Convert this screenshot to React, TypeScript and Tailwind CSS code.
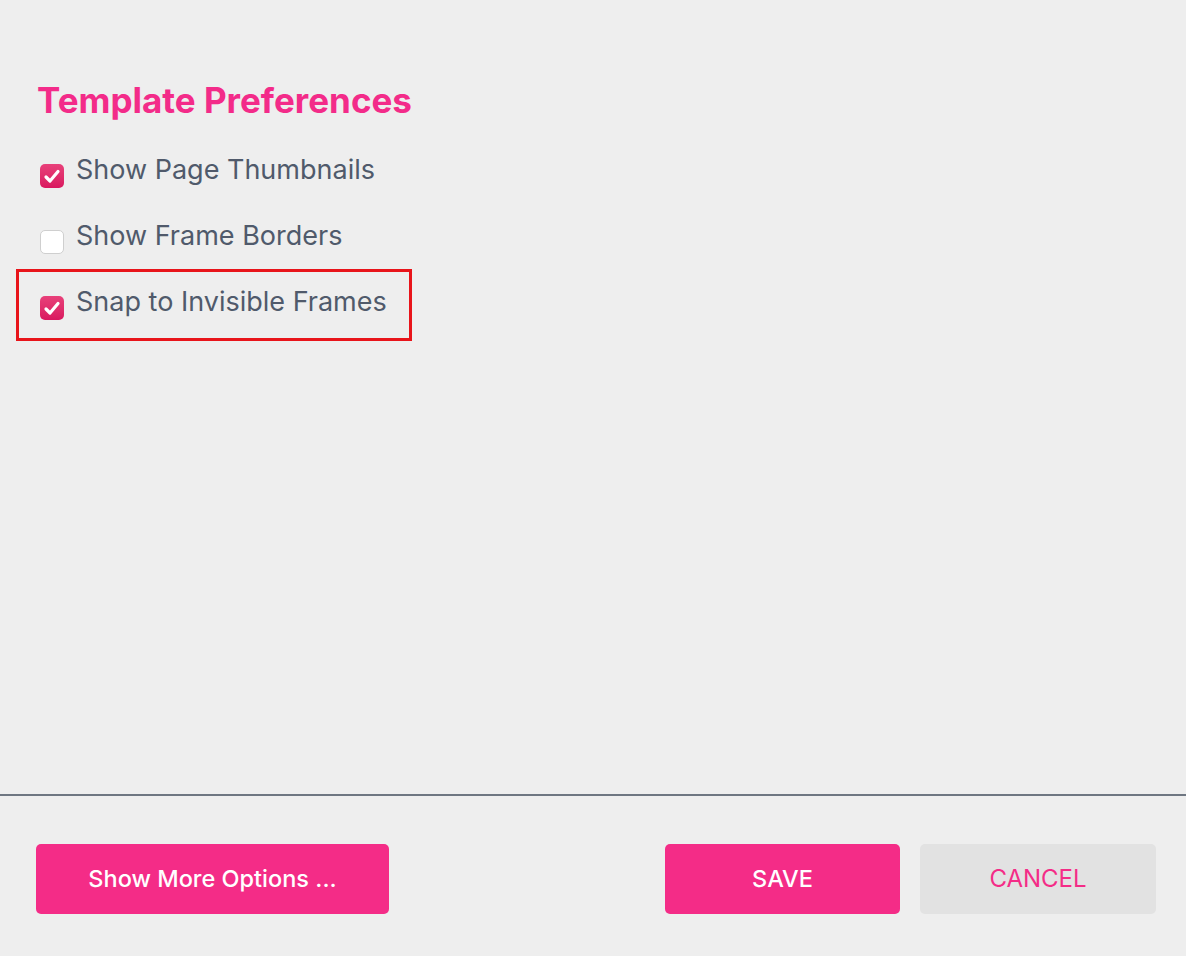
import React, { useState } from "react";

const font = { fontFamily: "Inter, 'Noto Sans', sans-serif" };

interface Pref {
  id: string;
  label: string;
  checked: boolean;
  highlighted?: boolean;
}

const initialPrefs: Pref[] = [
  { id: "thumbs", label: "Show Page Thumbnails", checked: true },
  { id: "borders", label: "Show Frame Borders", checked: false },
  { id: "snap", label: "Snap to Invisible Frames", checked: true, highlighted: true },
];

const Checkbox: React.FC<{ checked: boolean; onToggle: () => void }> = ({ checked, onToggle }) => (
  <button
    onClick={onToggle}
    className={`mt-[6px] flex h-[24px] w-[24px] shrink-0 items-center justify-center rounded-[5px] ${
      checked
        ? "bg-gradient-to-b from-[#e8407a] to-[#d9175f]"
        : "border border-[#cfcfcf] bg-white"
    }`}
  >
    {checked && (
      <svg width="24" height="24" viewBox="0 0 24 24" fill="none">
        <path
          d="M6 13 L10 17 L18 7.5"
          stroke="white"
          strokeWidth="3.2"
          strokeLinecap="round"
          strokeLinejoin="round"
        />
      </svg>
    )}
  </button>
);

export default function App() {
  const [prefs, setPrefs] = useState(initialPrefs);

  const toggle = (id: string) =>
    setPrefs((prev) => prev.map((p) => (p.id === id ? { ...p, checked: !p.checked } : p)));

  return (
    <div className="flex h-[956px] w-full flex-col bg-[#eeeeee]" style={font}>
      {/* Preferences */}
      <div className="h-[794px] pt-[80px]">
        <h1 className="pl-[37px] text-[35px] font-bold leading-[40px] text-[#f32b89]">
          Template Preferences
        </h1>
        <div className="mt-[20px] flex flex-col pl-[19px]">
          {prefs.map((p) => (
            <div
              key={p.id}
              className={`flex h-[66px] w-[390px] items-center gap-[12px] pl-[21px] ${
                p.highlighted ? "outline-[3px] outline-solid outline-[#e8141a]" : ""
              }`}
            >
              <Checkbox checked={p.checked} onToggle={() => toggle(p.id)} />
              <span className="mb-[6px] text-[27px] leading-[32px] text-[#505a6b]">{p.label}</span>
            </div>
          ))}
        </div>
      </div>

      {/* Footer */}
      <div className="flex flex-1 items-start justify-between border-t-2 border-[#6e7681] pl-[36px] pr-[30px] pt-[48px]">
        <button className="h-[70px] w-[353px] rounded-[5px] bg-[#f42c87] text-[23.5px] font-medium text-white">
          Show More Options ...
        </button>
        <div className="flex gap-[20px]">
          <button className="h-[70px] w-[235px] rounded-[5px] bg-[#f42c87] text-[23.5px] font-medium text-white">
            SAVE
          </button>
          <button className="h-[70px] w-[236px] rounded-[5px] bg-[#e2e2e2] text-[24px] text-[#f42c87]">
            CANCEL
          </button>
        </div>
      </div>
    </div>
  );
}
